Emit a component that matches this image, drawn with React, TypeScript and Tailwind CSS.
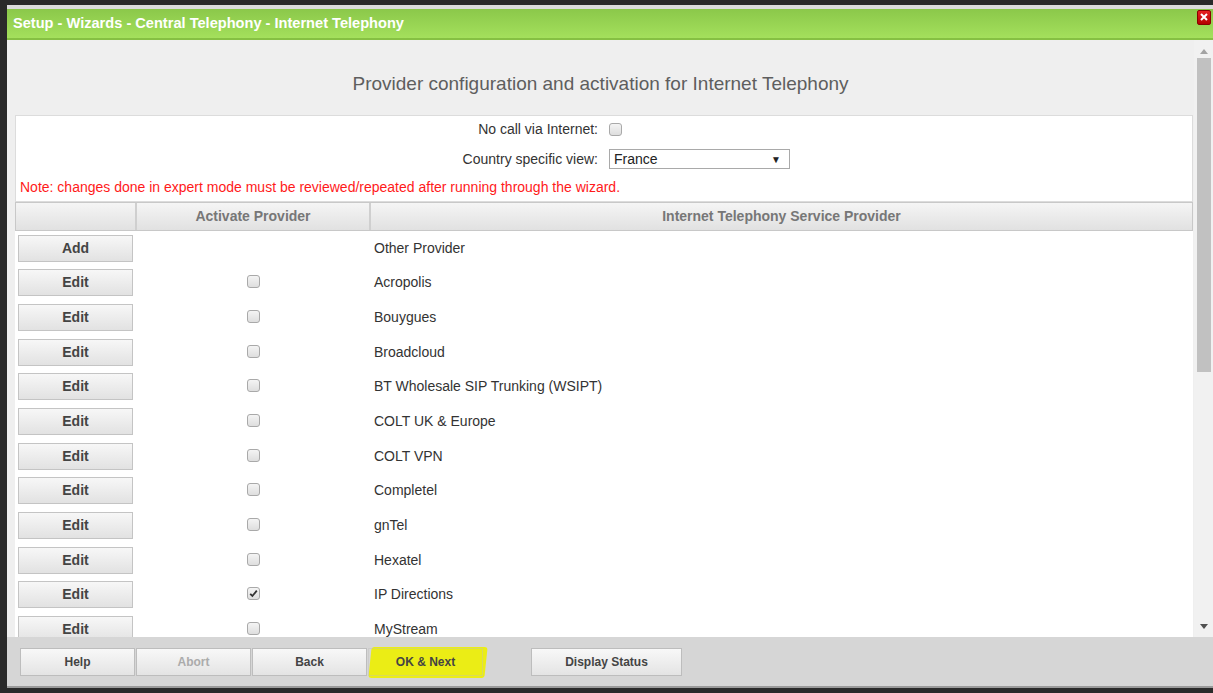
import React from "react";

const PROVIDERS: { name: string; checked?: boolean; add?: boolean }[] = [
  { name: "Other Provider", add: true },
  { name: "Acropolis" },
  { name: "Bouygues" },
  { name: "Broadcloud" },
  { name: "BT Wholesale SIP Trunking (WSIPT)" },
  { name: "COLT UK & Europe" },
  { name: "COLT VPN" },
  { name: "Completel" },
  { name: "gnTel" },
  { name: "Hexatel" },
  { name: "IP Directions", checked: true },
  { name: "MyStream" },
];

function CheckBox({ checked }: { checked?: boolean }) {
  return (
    <span className="inline-flex h-[13px] w-[13px] items-center justify-center rounded-[3px] border border-[#a9a9a9] bg-gradient-to-b from-[#f4f4f4] to-[#dedede]">
      {checked && (
        <svg width="9" height="9" viewBox="0 0 9 9">
          <path d="M1.2 4.8 L3.4 7 L7.8 1.6" fill="none" stroke="#333" strokeWidth="1.8" />
        </svg>
      )}
    </span>
  );
}

function RowButton({ label }: { label: string }) {
  return (
    <button className="ml-[3px] h-[27px] w-[115px] border border-[#c4c4c4] bg-gradient-to-b from-[#f7f7f7] to-[#e2e2e2] text-[14px] font-bold text-[#444]">
      {label}
    </button>
  );
}

function FooterButton({ label, disabled, w = "w-[115px]" }: { label: string; disabled?: boolean; w?: string }) {
  return (
    <button
      className={
        "h-[28px] border border-[#bdbdbd] bg-gradient-to-b from-[#f8f8f8] to-[#e4e4e4] text-[12px] font-bold leading-[14px] " +
        w +
        (disabled ? " text-[#ababab]" : " text-[#444]")
      }
    >
      {label}
    </button>
  );
}

export default function App() {
  return (
    <div className="flex h-[693px] w-[1213px] flex-col overflow-hidden bg-[#2a2a2a] pb-[5px] pl-[7px] pt-[5px] font-['Liberation_Sans',Arial,sans-serif]">
      <div className="flex flex-1 flex-col overflow-hidden border-t-[4px] border-[#dcdcdc]">
        {/* title bar */}
        <div className="flex h-[31px] items-center justify-between border-b-[2px] border-[#86c043] bg-gradient-to-b from-[#8bc84a] to-[#a4e05c] pl-[6px] pr-[2px]">
          <span className="text-[14.6px] font-bold text-white">
            Setup - Wizards - Central Telephony - Internet Telephony
          </span>
          <span className="mb-[13px] flex h-[15px] w-[14px] items-center justify-center rounded-[2px] border border-[#8a0000] bg-gradient-to-b from-[#e82020] to-[#b40000]">
            <svg width="8" height="8" viewBox="0 0 8 8">
              <path d="M1 1 L7 7 M7 1 L1 7" stroke="#fff" strokeWidth="2" />
            </svg>
          </span>
        </div>

        {/* scrolling content */}
        <div className="flex min-h-0 flex-1 bg-[#efefef]">
          <div className="flex min-w-0 flex-1 flex-col overflow-hidden">
            <div className="pb-[20px] pt-[32px] text-center text-[19px] leading-[23px] text-[#5e5e5e]">
              Provider configuration and activation for Internet Telephony
            </div>

            <div className="ml-[8px] mr-[1px] border border-[#dcdcdc] bg-white pb-[6px] pt-[3px]">
              <div className="grid grid-cols-[582px_1fr] items-center gap-x-[11px] text-[14px] text-[#333]">
                <span className="h-[20px] text-right leading-[20px]">No call via Internet:</span>
                <span className="flex h-[20px] items-center">
                  <CheckBox />
                </span>
                <span className="mt-[10px] h-[20px] text-right leading-[20px]">Country specific view:</span>
                <span className="mt-[10px] flex h-[20px] w-[181px] items-center justify-between border border-[#a9a9a9] bg-white pl-[4px] pr-[8px]">
                  <span className="text-[14px] text-[#222]">France</span>
                  <span className="text-[10px] text-[#222]">▼</span>
                </span>
              </div>
              <div className="mt-[10px] pl-[4px] text-[14px] leading-[16px] text-[#ff1a1a]">
                Note: changes done in expert mode must be reviewed/repeated after running through the wizard.
              </div>
            </div>

            <div className="ml-[8px] mr-[1px] flex-1 bg-white">
              <div className="grid h-[29px] grid-cols-[121px_234px_1fr] border border-[#c8c8c8] bg-gradient-to-b from-[#f5f5f5] to-[#e1e1e1] text-[14px] font-bold text-[#777]">
                <div className="border-r-[2px] border-[#cfcfcf]" />
                <div className="flex items-center justify-center border-r-[2px] border-[#cfcfcf]">Activate Provider</div>
                <div className="flex items-center justify-center">Internet Telephony Service Provider</div>
              </div>
              {PROVIDERS.map((p) => (
                <div key={p.name} className="grid h-[34.67px] grid-cols-[121px_234px_1fr] items-center">
                  <div>
                    <RowButton label={p.add ? "Add" : "Edit"} />
                  </div>
                  <div className="flex justify-center pb-[2px]">{!p.add && <CheckBox checked={p.checked} />}</div>
                  <div className="pl-[4px] text-[14px] text-[#333]">{p.name}</div>
                </div>
              ))}
            </div>
          </div>

          {/* scrollbar */}
          <div className="flex w-[19px] flex-col items-center bg-[#f1f1f1] pt-[9px]">
            <svg width="8" height="5" viewBox="0 0 8 5">
              <path d="M0 5 L4 0 L8 5 Z" fill="#a3a3a3" />
            </svg>
            <div className="mt-[4px] h-[314px] w-[14px] bg-[#c1c1c1]" />
            <div className="flex-1" />
            <svg className="mb-[8px]" width="8" height="5" viewBox="0 0 8 5">
              <path d="M0 0 L8 0 L4 5 Z" fill="#505050" />
            </svg>
          </div>
        </div>

        {/* footer */}
        <div className="relative flex h-[51px] items-center gap-[1px] border-b-[2px] border-[#9a9a9a] bg-[#d6d6d6] pl-[13px]">
          <FooterButton label="Help" />
          <FooterButton label="Abort" disabled />
          <FooterButton label="Back" />
          <div className="relative h-[28px] w-[115px]">
            <span className="absolute left-[2px] top-[-1px] h-[31px] w-[116px] -skew-x-6 rounded-[3px] bg-[#eef000]/90" />
            <span className="absolute inset-0 flex items-center justify-center border border-[#bdbdbd]/40 text-[12px] font-bold leading-[14px] text-[#444]">
              OK &amp; Next
            </span>
          </div>
          <div className="ml-[47px]">
            <FooterButton label="Display Status" w="w-[151px]" />
          </div>
        </div>
      </div>
    </div>
  );
}
